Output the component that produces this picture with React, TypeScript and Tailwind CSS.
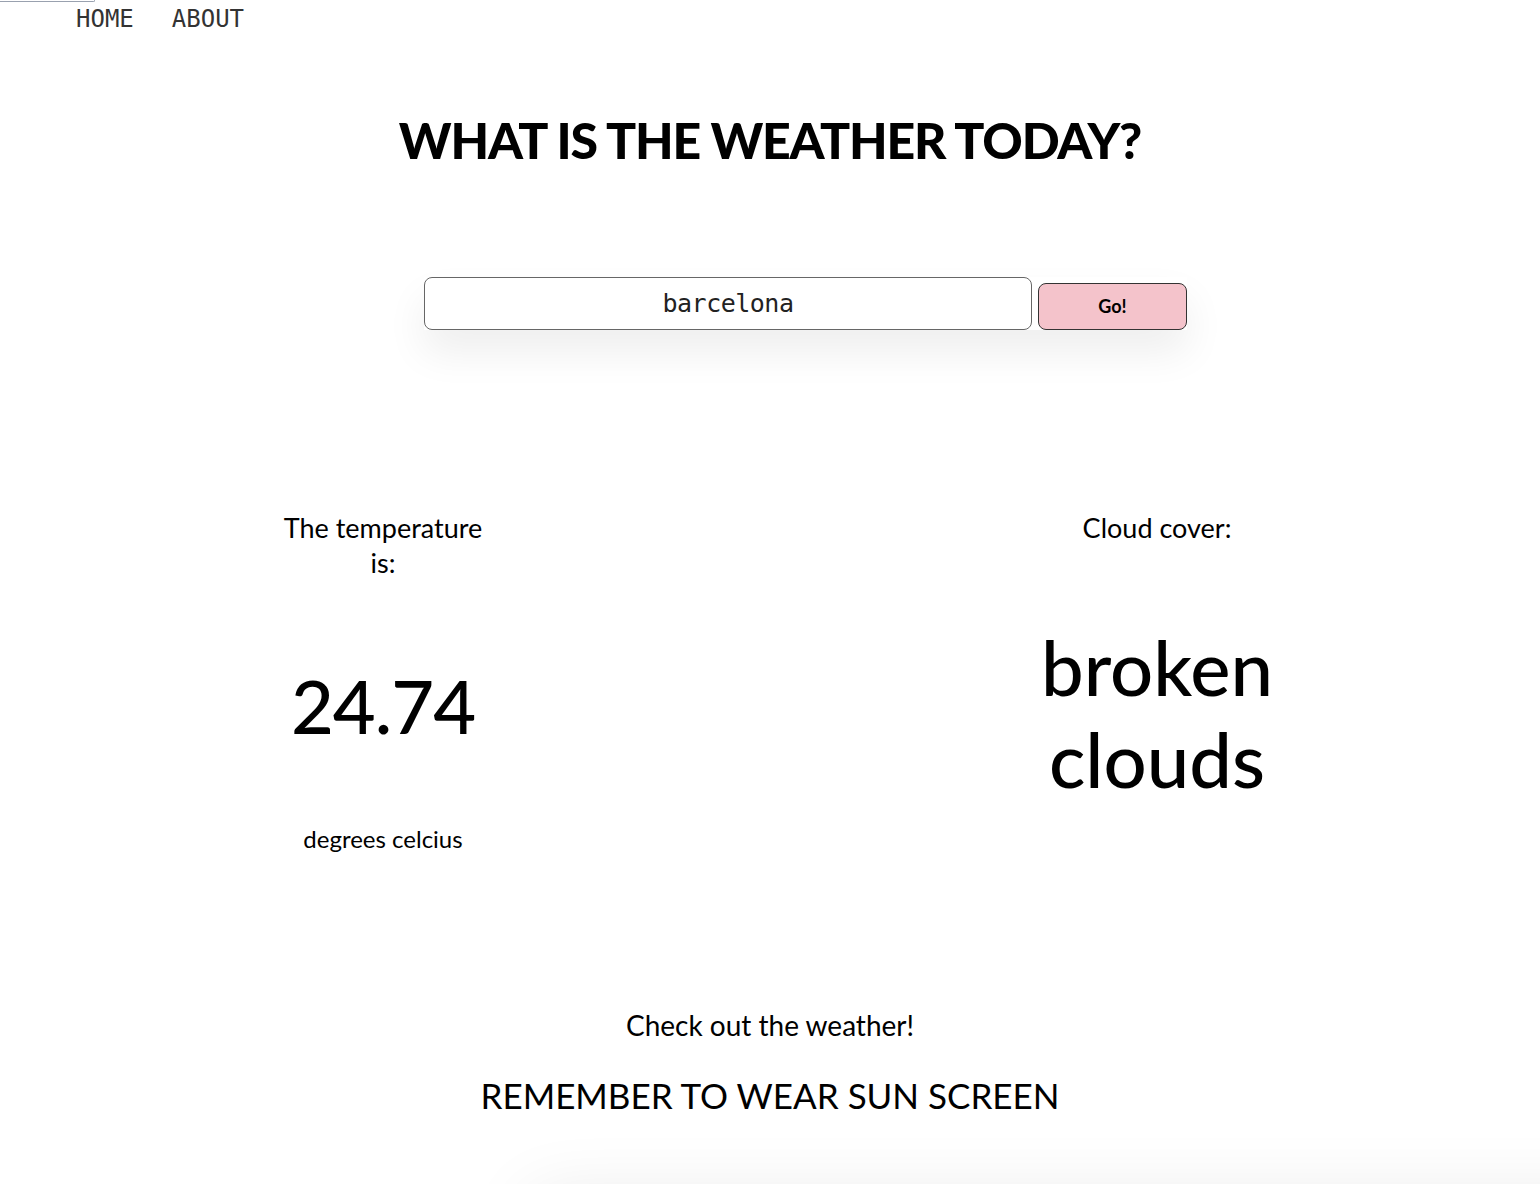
import React from 'react';

const body = { fontFamily: 'Lato, "Noto Sans", sans-serif' };
const mono = { fontFamily: '"DejaVu Sans Mono", "Liberation Mono", monospace' };

const App: React.FC = () => {
  return (
    <div className="relative min-h-[1184px] overflow-hidden bg-white text-black" style={body}>
      <div className="h-[2px] w-[95px] rounded-br-md border-b border-r border-gray-400" />
      <nav className="flex h-[34px] items-center gap-[38px] pl-[76px] text-[24px] font-light text-[#333]" style={mono}>
        <a className="leading-none">HOME</a>
        <a className="leading-none">ABOUT</a>
      </nav>

      <h1 className="mt-[79px] text-center text-[50px] font-black leading-none tracking-[-1.2px]">
        WHAT IS THE WEATHER TODAY?
      </h1>

      <div className="mt-[112px] flex justify-center pl-[71px]">
        <form className="flex items-end gap-[6px] shadow-[0_22px_40px_rgba(0,0,0,0.07)]">
          <input
            defaultValue="barcelona"
            className="h-[53px] w-[608px] rounded-[8px] border border-[#666] text-center text-[25px] font-light text-[#222] outline-none"
            style={{ ...mono, letterSpacing: '-0.5px' }}
          />
          <button
            type="button"
            className="h-[47px] w-[149px] rounded-[8px] border border-[#333] bg-[#f4c3cb] text-[18px] font-bold"
          >
            Go!
          </button>
        </form>
      </div>

      <div className="mt-[180px] flex justify-center gap-[534px]">
        <div className="flex w-[240px] flex-col items-center text-center">
          <p className="w-[215px] text-[27px] leading-[35px]">The temperature is:</p>
          <p className="mt-[89px] text-[74px] font-medium leading-none tracking-[-1px]">24.74</p>
          <p className="mt-[78px] text-[24px] leading-[36px]">degrees celcius</p>
        </div>
        <div className="flex w-[240px] flex-col items-center text-center">
          <p className="text-[27px] leading-[35px]">Cloud cover:</p>
          <p className="mt-[76px] text-[76px] font-medium leading-[92px]">broken clouds</p>
        </div>
      </div>

      <div className="mt-[151px] flex flex-col items-center">
        <p className="text-[28px] leading-[34px]">Check out the weather!</p>
        <p className="mt-[32px] text-[35px] leading-[42px]">REMEMBER TO WEAR SUN SCREEN</p>
      </div>

      <div className="mt-[80px] ml-[530px] h-[200px] w-[1100px] bg-white shadow-[0_0_70px_rgba(0,0,0,0.09)]" />
    </div>
  );
};

export default App;
